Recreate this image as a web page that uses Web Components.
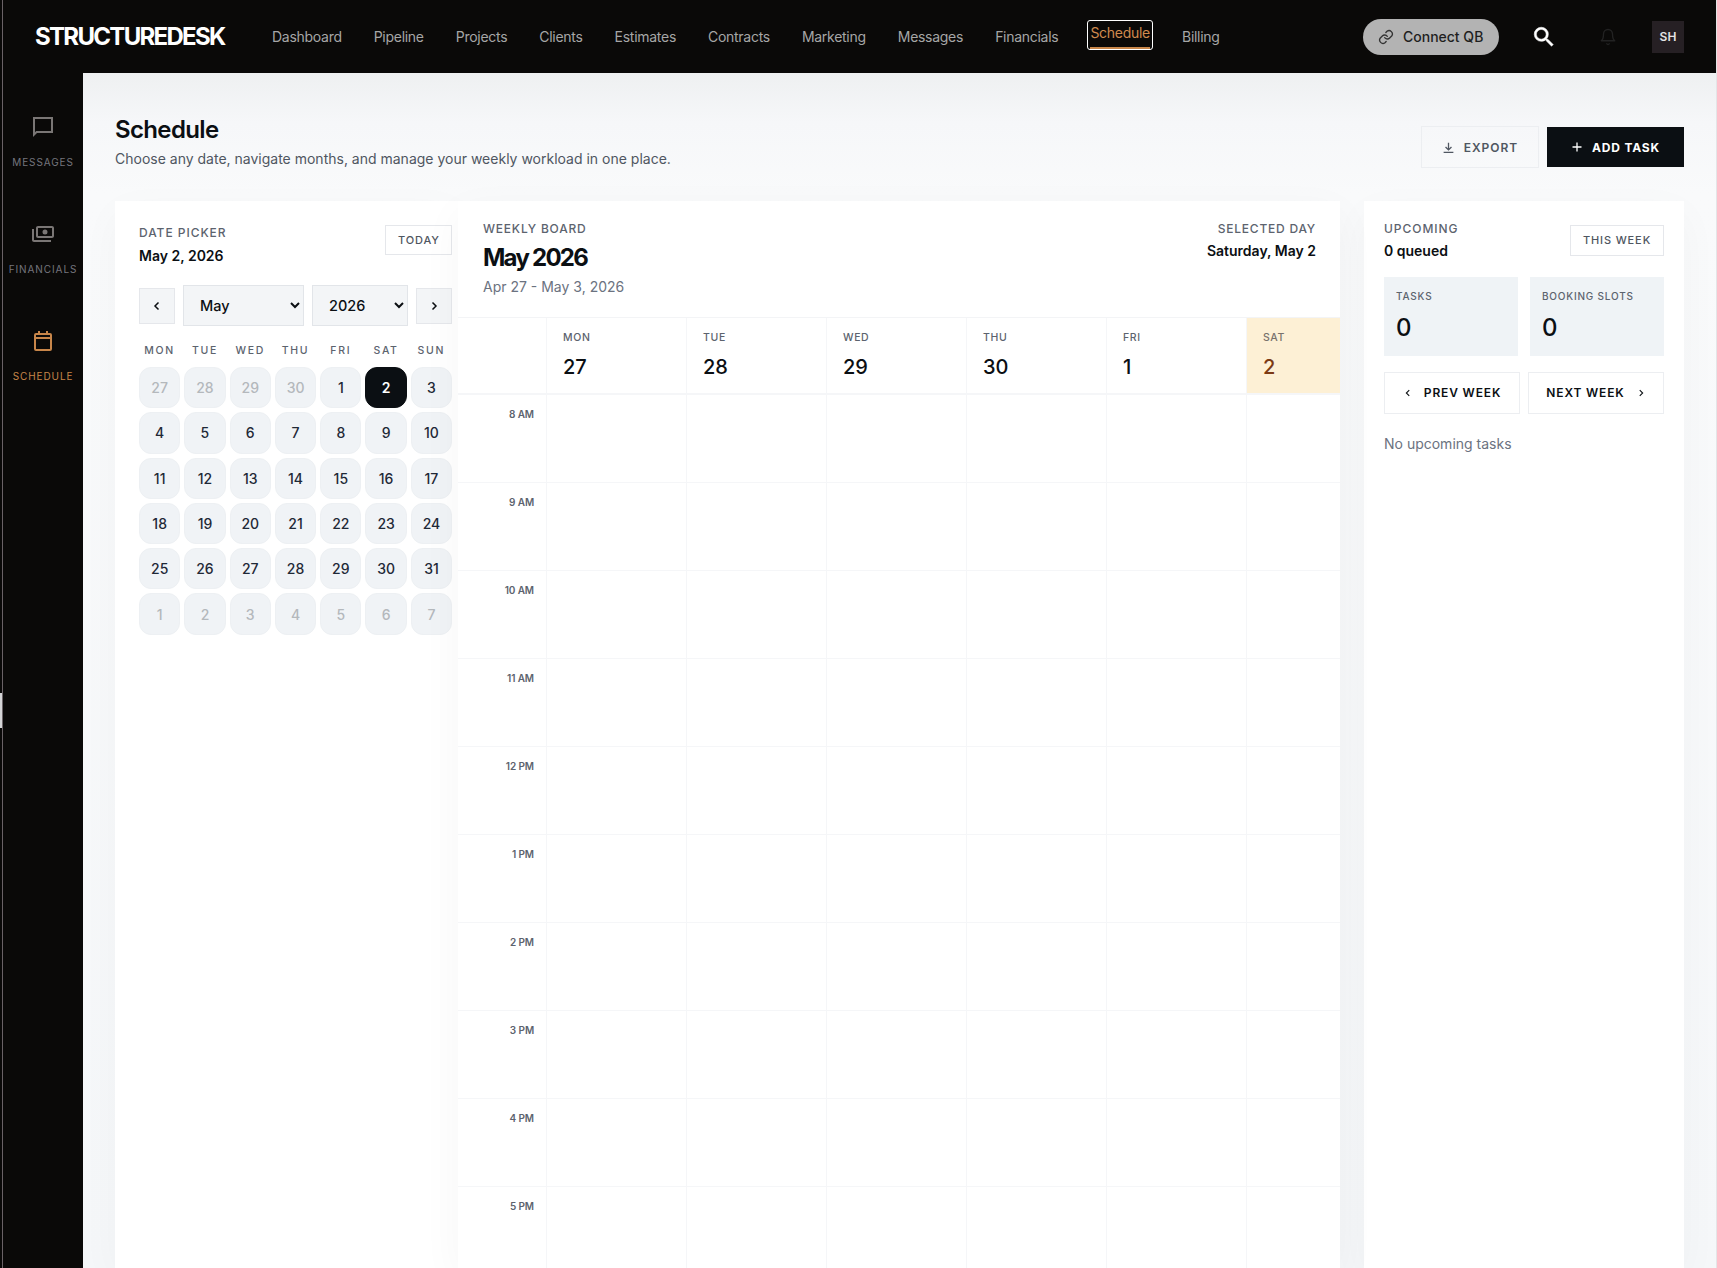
<!doctype html>
<html lang="en">
<head>
<meta charset="utf-8">
<title>Schedule</title>
<style>
  html, body { margin: 0; height: 100%; overflow: hidden; }
  body { font-family: Inter, "Liberation Sans", sans-serif; background: #f5f7f8; color: #0b0f13; }
</style>
</head>
<body>
<sd-app></sd-app>

<template id="sd-app-template">
  <style>
    :host { display: grid; grid-template-rows: 73px 1fr; grid-template-columns: 83px 1fr; height: 1268px; width: 1717px; overflow: hidden; position: relative; }
    /* hairline the screenshot has along its right edge */
    :host::after { content: ""; position: absolute; top: 0; right: 0; bottom: 0; width: 1px; background: #e4e5e7; }
    sd-topbar { grid-column: 1 / -1; }
    main { padding: 38px 33px 0 32px; display: flex; flex-direction: column; min-width: 0; min-height: 0; background: linear-gradient(180deg, #eef0f1 0, #f6f7f9 50px, #f9fafb 120px, #f5f7f9 100%); }
    .board { display: grid; grid-template-columns: 343px 882px 344px; margin-top: 32px; flex: 1; min-height: 0; }
    sd-upcoming { margin-left: 24px; width: 320px; box-sizing: border-box; }
  </style>
  <sd-topbar></sd-topbar>
  <sd-sidebar></sd-sidebar>
  <main>
    <sd-page-head></sd-page-head>
    <div class="board">
      <sd-date-picker></sd-date-picker>
      <sd-week-board></sd-week-board>
      <sd-upcoming></sd-upcoming>
    </div>
  </main>
</template>

<template id="sd-topbar-template">
  <style>
    :host { display: flex; align-items: center; height: 73px; background: #0a0908; color: #a8a8a8; padding: 0 33px 0 35px; box-sizing: border-box; }
    .logo { font-size: 24px; font-weight: 700; letter-spacing: -1.7px; color: #fff; width: 237px; }
    nav { display: flex; align-items: center; gap: 32px; font-size: 14px; letter-spacing: -.28px; }
    nav span { display: block; color: #a6a6a6; }
    nav .active { color: #d08a4e; border-bottom: 2px solid #c8864a; padding: 0 0 6px; position: relative; }
    nav .active::after { content: ""; position: absolute; inset: -4px -3px -3px; border: 1px solid #fff; border-radius: 3px; }
    .right { margin-left: auto; display: flex; align-items: center; }
    .qb { display: flex; align-items: center; gap: 9px; height: 36px; width: 136px; box-sizing: border-box; padding-left: 15px; border-radius: 18px; background: #b3b3b3; color: #1f1f1f; font-size: 14px; font-weight: 500; }
    .search { margin-left: 32px; }
    .bell { margin-left: 42px; }
    .avatar { margin-left: 35px; width: 32px; height: 32px; background: #262024; color: #e4e4e4; font-size: 12px; font-weight: 600; display: grid; place-items: center; }
    svg { display: block; }
  </style>
  <div class="logo">STRUCTUREDESK</div>
  <nav>
    <span>Dashboard</span><span>Pipeline</span><span>Projects</span><span>Clients</span><span>Estimates</span><span>Contracts</span><span>Marketing</span><span>Messages</span><span>Financials</span><span class="active">Schedule</span><span>Billing</span>
  </nav>
  <div class="right">
    <div class="qb">
      <svg width="16" height="16" viewBox="0 0 24 24" fill="none" stroke="#333" stroke-width="2" stroke-linecap="round" stroke-linejoin="round"><path d="M10 13a5 5 0 0 0 7.5.5l3-3a5 5 0 0 0-7-7l-1.7 1.7"/><path d="M14 11a5 5 0 0 0-7.5-.5l-3 3a5 5 0 0 0 7 7l1.7-1.7"/></svg>
      Connect QB
    </div>
    <svg class="search" width="26" height="26" viewBox="0 0 24 24" fill="#fff" stroke="#fff" stroke-width=".5"><path d="M15.5 14h-.79l-.28-.27A6.47 6.47 0 0 0 16 9.5 6.5 6.5 0 1 0 9.5 16c1.61 0 3.09-.59 4.23-1.57l.27.28v.79l5 4.99L20.49 19l-4.99-5zm-6 0C7.01 14 5 11.99 5 9.5S7.01 5 9.5 5 14 7.01 14 9.5 11.99 14 9.5 14z"/></svg>
    <svg class="bell" width="18" height="18" viewBox="0 0 24 24" fill="none" stroke="#222" stroke-width="1.8" stroke-linecap="round" stroke-linejoin="round"><path d="M18 8a6 6 0 1 0-12 0c0 7-3 9-3 9h18s-3-2-3-9"/><path d="M13.7 21a2 2 0 0 1-3.4 0"/></svg>
    <div class="avatar">SH</div>
  </div>
</template>

<template id="sd-sidebar-template">
  <style>
    :host { display: block; background: #0a0908; position: relative; padding: 42px 0 0 3px; box-sizing: border-box; }
    :host::before { content: ""; position: absolute; left: 2px; top: -73px; bottom: 0; width: 1px; background: #6a6266; }
    /* the sliver of a browser scrollbar thumb at the window's left edge */
    :host::after { content: ""; position: absolute; left: 0; top: 620px; height: 35px; width: 2px; background: #d4d4d6; }
    a { display: flex; flex-direction: column; align-items: center; height: 107px; font-size: 10px; line-height: 12px; letter-spacing: .09em; color: #75757d; text-transform: uppercase; }
    a svg { margin-bottom: 17px; display: block; }
    a.on { color: #c8864a; }
  </style>
  <a><svg width="24" height="24" viewBox="0 0 24 24" fill="#7a7675"><path fill-rule="evenodd" d="M2 2h20v16H6l-4 4zM4 4v13.2L5.2 16H20V4z"/></svg>Messages</a>
  <a><svg width="24" height="24" viewBox="0 0 24 24" fill="#7a7675"><g transform="matrix(-1 0 0 1 24 0)"><path d="M19 14V6c0-1.1-.9-2-2-2H3c-1.1 0-2 .9-2 2v8c0 1.1.9 2 2 2h14c1.1 0 2-.9 2-2zm-2 0H3V6h14v8zm-7-6.5a2.5 2.5 0 1 0 0 5 2.5 2.5 0 0 0 0-5zM23 7v11c0 1.1-.9 2-2 2H4v-2h17V7h2z"/></g></svg>Financials</a>
  <a class="on"><svg width="24" height="24" viewBox="0 0 24 24" fill="none" stroke="#c8864a" stroke-width="2"><rect x="4" y="5" width="16" height="16" rx="1"/><path d="M4 9h16M8 2v4M16 2v4"/></svg>Schedule</a>
</template>

<template id="sd-page-head-template">
  <style>
    :host { display: flex; justify-content: space-between; align-items: flex-start; height: 58px; }
    h1 { font-size: 24px; line-height: 30px; font-weight: 600; letter-spacing: -.65px; margin: 4px 0 0; color: #0b0f13; }
    p { font-size: 14px; line-height: 20px; margin: 4px 0 0; color: #4f5661; }
    .actions { display: flex; gap: 8px; margin-top: 16px; }
    button { font: inherit; font-size: 12px; font-weight: 600; letter-spacing: .08em; display: flex; align-items: center; gap: 9px; justify-content: center; box-sizing: border-box; border-radius: 0; }
    .export { width: 118px; height: 42px; background: transparent; border: 1px solid #eceef1; color: #4f5661; margin-top: -1px; }
    .add { width: 137px; height: 40px; background: #0b0f13; color: #fff; border: 0; font-weight: 700; letter-spacing: .07em; }
  </style>
  <div>
    <h1>Schedule</h1>
    <p>Choose any date, navigate months, and manage your weekly workload in one place.</p>
  </div>
  <div class="actions">
    <button class="export"><svg width="13" height="13" viewBox="0 0 24 24" fill="none" stroke="#4f5661" stroke-width="2.4"><path d="M12 3v13M6.5 11l5.5 5.5 5.5-5.5M3 21h18"/></svg>EXPORT</button>
    <button class="add"><svg width="12" height="12" viewBox="0 0 24 24" fill="none" stroke="#fff" stroke-width="2.6"><path d="M12 3v18M3 12h18"/></svg>ADD TASK</button>
  </div>
</template>

<template id="sd-date-picker-template">
  <style>
    :host { display: block; background: #fff; padding: 24px 6px 0 24px; box-sizing: border-box; box-shadow: 0 12px 40px rgba(15,23,42,.03); }
    .head { display: flex; justify-content: space-between; height: 60px; }
    .eyebrow { font-size: 12px; font-weight: 500; letter-spacing: .08em; color: #5c636e; line-height: 16px; }
    .date { font-size: 14px; font-weight: 600; line-height: 20px; margin-top: 5px; color: #0b0f13; }
    .today { font: inherit; font-size: 11px; font-weight: 500; letter-spacing: .08em; color: #4f5661; width: 67px; height: 30px; padding: 0 0 0 1px; background: #fff; border: 1px solid #e5e7eb; border-radius: 0; }
    .nav { display: grid; grid-template-columns: 36px 121px 96px 36px; justify-content: space-between; align-items: center; }
    .nav button { height: 36px; padding: 0; background: #f3f5f7; border: 1px solid #e5e7eb; border-radius: 0; display: grid; place-items: center; }
    select { font: inherit; font-size: 14.5px; font-weight: 500; color: #0b0f13; height: 41px; background-color: #f3f5f7; border: 1px solid #e2e5e9; border-radius: 0; padding: 0 0 0 12px; width: 100%; }
    .dow, .days { display: grid; grid-template-columns: repeat(7, 1fr); column-gap: 4px; }
    .dow { margin-top: 15px; height: 18px; align-items: center; text-align: center; font-size: 10.5px; font-weight: 500; letter-spacing: .16em; color: #5c636e; }
    .days { margin-top: 8px; row-gap: 4px; }
    .days span { aspect-ratio: 1; box-sizing: border-box; display: grid; place-items: center; background: #f0f3f6; border: 1px solid #edf0f3; border-radius: 12px; font-size: 14px; font-weight: 550; color: #1f2937; }
    .days .out { color: #b4b8bc; font-weight: 500; }
    .days .sel { background: #0b0f13; border-color: #0b0f13; color: #fff; font-weight: 600; }
  </style>
  <div class="head">
    <div>
      <div class="eyebrow">DATE PICKER</div>
      <div class="date">May 2, 2026</div>
    </div>
    <button class="today">TODAY</button>
  </div>
  <div class="nav">
    <button aria-label="Previous month"><svg width="12" height="12" viewBox="0 0 24 24" fill="none" stroke="#0b0f13" stroke-width="3"><path d="M15 5l-7 7 7 7"/></svg></button>
    <select><option>May</option></select>
    <select><option>2026</option></select>
    <button aria-label="Next month"><svg width="12" height="12" viewBox="0 0 24 24" fill="none" stroke="#0b0f13" stroke-width="3"><path d="M9 5l7 7-7 7"/></svg></button>
  </div>
  <div class="dow"><span>MON</span><span>TUE</span><span>WED</span><span>THU</span><span>FRI</span><span>SAT</span><span>SUN</span></div>
  <div class="days" id="days"></div>
</template>

<template id="sd-week-board-template">
  <style>
    :host { display: flex; flex-direction: column; background: #fff; overflow: hidden; min-height: 0; position: relative; box-shadow: 0 12px 40px rgba(15,23,42,.04); }
    .head { display: flex; justify-content: space-between; height: 116px; padding: 20px 24px 0 25px; box-sizing: border-box; flex: none; }
    .eyebrow { font-size: 12px; font-weight: 500; letter-spacing: .065em; color: #5c636e; line-height: 16px; }
    h2 { font-size: 24px; line-height: 30px; font-weight: 650; letter-spacing: -1.75px; margin: 6px 0 0; color: #0b0f13; }
    .range { font-size: 14px; line-height: 20px; margin-top: 4px; color: #6b7280; }
    .sel { text-align: right; }
    .sel b { display: block; font-size: 14px; font-weight: 600; line-height: 20px; margin-top: 4px; color: #0b0f13; }
    .grid { display: grid; grid-template-columns: 89px repeat(6, 140px); width: 929px; border-top: 1px solid #f3f4f6; flex: none; }
    .grid > div { box-sizing: border-box; border-right: 1px solid #f5f6f8; }
    .grid > .corner, .grid > .day { height: 77px; border-bottom: 2px solid #f5f6f8; }
    .day { padding: 12px 16px 0; }
    .day small { display: block; font-size: 10.5px; font-weight: 500; letter-spacing: .06em; color: #5c636e; line-height: 16px; }
    .day strong { display: block; font-size: 20px; font-weight: 550; line-height: 28px; margin-top: 7px; color: #0b0f13; }
    .day.now { background: #fdf0d5; }
    .day.now small { color: #78716c; }
    .day.now strong { color: #7c3a14; font-weight: 500; }
    .time { height: 88px; padding: 12px 12px 0 0; text-align: right; font-size: 10px; font-weight: 600; letter-spacing: -.1px; line-height: 14px; color: #5c636e; }
    .cell, .time { border-bottom: 1px solid #f5f6f8; }
    .cell { height: 88px; }
  </style>
  <div class="head">
    <div>
      <div class="eyebrow">WEEKLY BOARD</div>
      <h2>May 2026</h2>
      <div class="range">Apr 27 - May 3, 2026</div>
    </div>
    <div class="sel">
      <div class="eyebrow">SELECTED DAY</div>
      <b>Saturday, May 2</b>
    </div>
  </div>
  <div class="grid" id="grid"></div>
</template>

<template id="sd-upcoming-template">
  <style>
    :host { display: block; background: #fff; padding: 20px 20px 0; box-shadow: 0 12px 40px rgba(15,23,42,.03); }
    .head { display: flex; justify-content: space-between; height: 56px; }
    .eyebrow { font-size: 12px; font-weight: 500; letter-spacing: .08em; color: #5c636e; line-height: 16px; }
    .count { font-size: 14px; font-weight: 600; line-height: 20px; margin-top: 4px; color: #0b0f13; }
    .week { font: inherit; font-size: 11px; font-weight: 500; letter-spacing: .08em; color: #4f5661; width: 94px; height: 31px; margin-top: 4px; padding: 0 0 1px; background: #fff; border: 1px solid #e5e7eb; border-radius: 0; }
    .stats { display: grid; grid-template-columns: 1fr 1fr; gap: 12px; }
    sd-stat { height: 79px; }
    .pager { display: grid; grid-template-columns: 1fr 1fr; gap: 8px; margin-top: 16px; }
    .pager button { font: inherit; font-size: 12px; font-weight: 600; letter-spacing: .07em; color: #0b0f13; height: 42px; padding: 0 0 1px; background: #fff; border: 1px solid #eceef1; border-radius: 0; display: flex; align-items: center; justify-content: center; gap: 11px; }
    p { margin: 20px 0 0; font-size: 14px; line-height: 20px; color: #6b7280; }
  </style>
  <div class="head">
    <div>
      <div class="eyebrow">UPCOMING</div>
      <div class="count">0 queued</div>
    </div>
    <button class="week">THIS WEEK</button>
  </div>
  <div class="stats">
    <sd-stat label="TASKS" value="0"></sd-stat>
    <sd-stat label="BOOKING SLOTS" value="0"></sd-stat>
  </div>
  <div class="pager">
    <button><svg width="10" height="10" viewBox="0 0 24 24" fill="none" stroke="#0b0f13" stroke-width="2.6"><path d="M15 5l-7 7 7 7"/></svg>PREV WEEK</button>
    <button>NEXT WEEK<svg width="10" height="10" viewBox="0 0 24 24" fill="none" stroke="#0b0f13" stroke-width="2.6"><path d="M9 5l7 7-7 7"/></svg></button>
  </div>
  <p>No upcoming tasks</p>
</template>

<template id="sd-stat-template">
  <style>
    :host { display: block; background: #eff3f6; padding: 12px 12px 0; box-sizing: border-box; }
    .label { font-size: 10px; font-weight: 500; letter-spacing: .08em; color: #5c636e; line-height: 14px; }
    .value { font-size: 24px; font-weight: 550; line-height: 30px; margin-top: 10px; color: #0b0f13; }
  </style>
  <div class="label"></div>
  <div class="value"></div>
</template>

<script>
  'use strict';
  class TemplatedElement extends HTMLElement {
    constructor(templateId) {
      super();
      this.attachShadow({mode: 'open'});
      this.shadowRoot.appendChild(document.getElementById(templateId).content.cloneNode(true));
    }
  }

  class SdApp extends TemplatedElement { constructor() { super('sd-app-template'); } }
  class SdTopbar extends TemplatedElement { constructor() { super('sd-topbar-template'); } }
  class SdSidebar extends TemplatedElement { constructor() { super('sd-sidebar-template'); } }
  class SdPageHead extends TemplatedElement { constructor() { super('sd-page-head-template'); } }
  class SdUpcoming extends TemplatedElement { constructor() { super('sd-upcoming-template'); } }

  class SdStat extends TemplatedElement {
    constructor() { super('sd-stat-template'); }
    connectedCallback() {
      this.shadowRoot.querySelector('.label').textContent = this.getAttribute('label');
      this.shadowRoot.querySelector('.value').textContent = this.getAttribute('value');
    }
  }

  class SdDatePicker extends TemplatedElement {
    constructor() { super('sd-date-picker-template'); }
    connectedCallback() {
      const days = this.shadowRoot.getElementById('days');
      const cells = [];
      [27, 28, 29, 30].forEach(d => cells.push([d, 'out']));
      for (let d = 1; d <= 31; d++) cells.push([d, d === 2 ? 'sel' : '']);
      for (let d = 1; d <= 7; d++) cells.push([d, 'out']);
      days.innerHTML = cells.map(([d, cls]) => `<span class="${cls}">${d}</span>`).join('');
    }
  }

  class SdWeekBoard extends TemplatedElement {
    constructor() { super('sd-week-board-template'); }
    connectedCallback() {
      const week = [['MON', 27], ['TUE', 28], ['WED', 29], ['THU', 30], ['FRI', 1], ['SAT', 2]];
      const hours = ['8 AM', '9 AM', '10 AM', '11 AM', '12 PM', '1 PM', '2 PM', '3 PM', '4 PM', '5 PM'];
      let html = '<div class="corner"></div>';
      html += week.map(([n, d]) => `<div class="day${n === 'SAT' ? ' now' : ''}"><small>${n}</small><strong>${d}</strong></div>`).join('');
      hours.forEach(h => {
        html += `<div class="time">${h}</div>` + '<div class="cell"></div>'.repeat(week.length);
      });
      this.shadowRoot.getElementById('grid').innerHTML = html;
    }
  }

  customElements.define('sd-app', SdApp);
  customElements.define('sd-topbar', SdTopbar);
  customElements.define('sd-sidebar', SdSidebar);
  customElements.define('sd-page-head', SdPageHead);
  customElements.define('sd-stat', SdStat);
  customElements.define('sd-date-picker', SdDatePicker);
  customElements.define('sd-week-board', SdWeekBoard);
  customElements.define('sd-upcoming', SdUpcoming);
</script>
</body>
</html>
